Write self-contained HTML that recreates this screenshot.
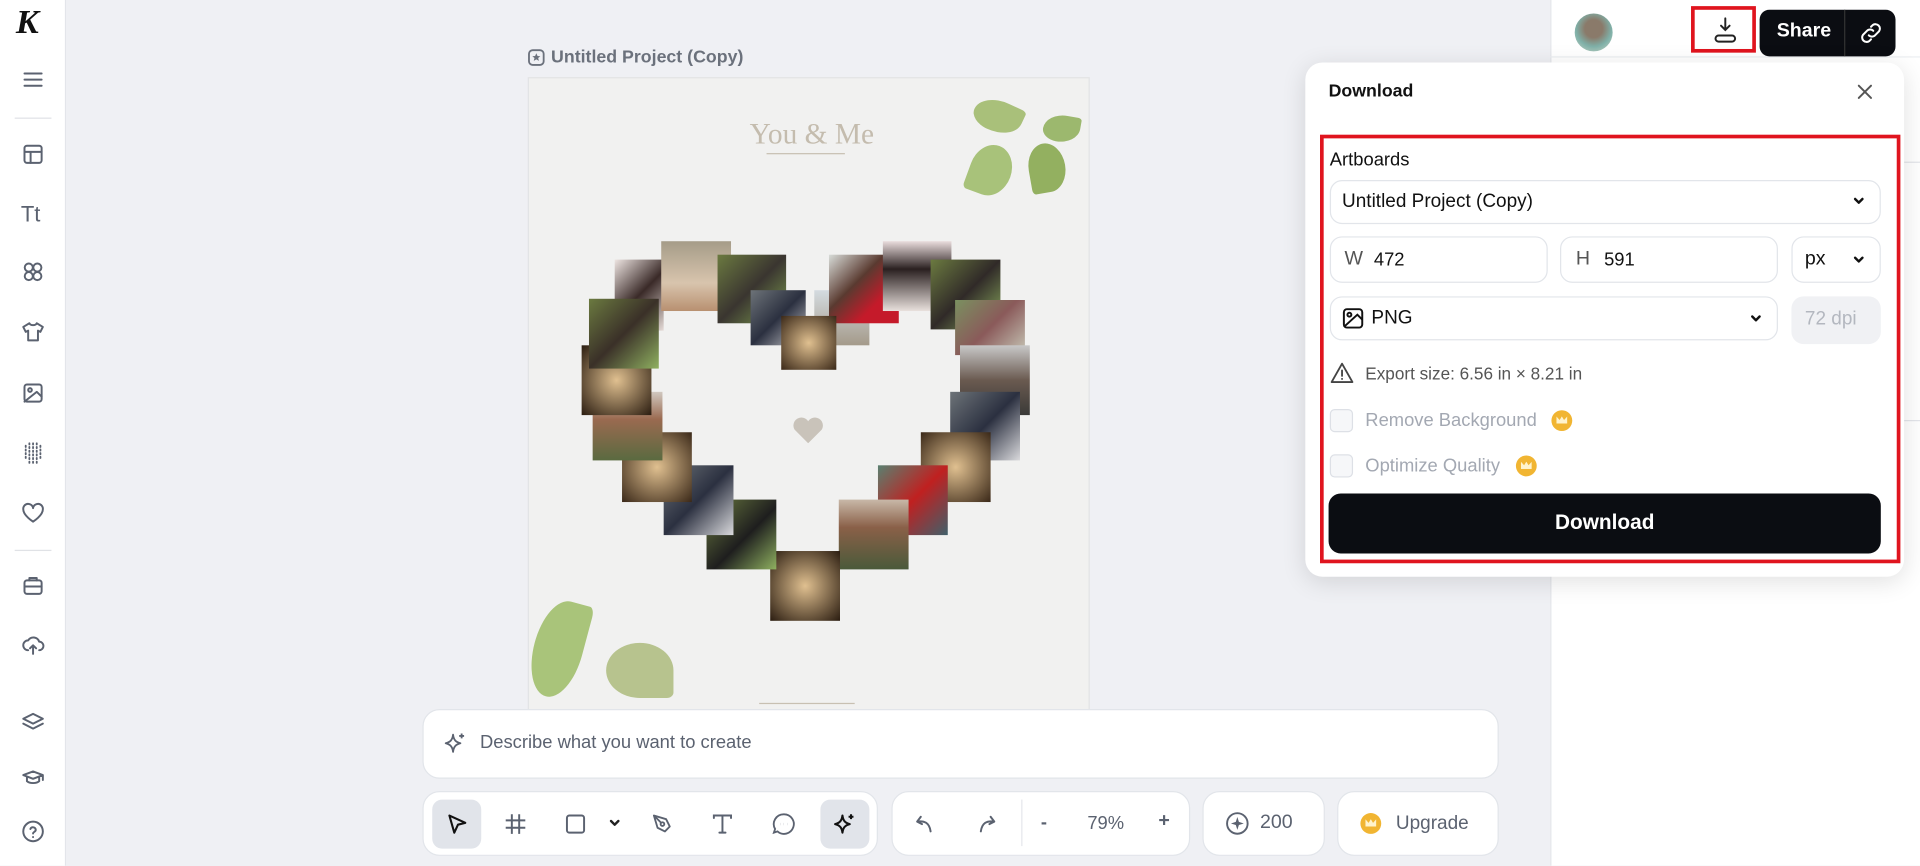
<!DOCTYPE html>
<html><head><meta charset="utf-8"><style>
*{box-sizing:border-box;margin:0;padding:0}
html,body{width:1920px;height:866px;overflow:hidden;background:#eff0f4}
#s{position:absolute;left:0;top:0;width:1568px;height:707px;transform:scale(1.22449);transform-origin:0 0;font-family:"Liberation Sans",sans-serif;background:#eff0f4}
.a{position:absolute}
.ic{position:absolute;left:17px;width:20px;height:20px;fill:none;stroke:#5b6270;stroke-width:1.6;stroke-linecap:round;stroke-linejoin:round}
.t{position:absolute}
.box{position:absolute;background:#fff;border:1px solid #e2e5ea;border-radius:10px}
.tb{position:absolute;background:#fff;border:1px solid #e2e5ea;border-radius:14px}
.chev{position:absolute;width:12px;height:12px;fill:none;stroke:#111;stroke-width:2;stroke-linecap:round;stroke-linejoin:round}
.crown{position:absolute;width:17px;height:17px;border-radius:50%;background:#f1b532}
.crown:after{content:"";position:absolute;left:4px;top:5px;width:9px;height:6px;background:#fff3cc;clip-path:polygon(0 100%,0 0,30% 50%,50% 0,70% 50%,100% 0,100% 100%)}
</style></head><body><div id="s">
<!-- left sidebar -->
<div class="a" style="left:0;top:0;width:54px;height:707px;background:#fff;border-right:1px solid #e3e5ea"></div>
<div class="a" style="left:13px;top:3px;font:italic 900 28px 'Liberation Serif',serif;color:#111">K</div>
<svg class="ic" style="top:55px" viewBox="0 0 20 20"><path d="M3 5h14M3 10h14M3 15h14"/></svg>
<div class="a" style="left:12px;top:96px;width:30px;height:1px;background:#e0e2e6"></div>
<svg class="ic" style="top:116px" viewBox="0 0 20 20"><rect x="3" y="3" width="14" height="14" rx="2"/><path d="M3 8h14M8 8v9"/></svg>
<div class="a" style="left:17px;top:165px;font:18px 'Liberation Sans';color:#5b6270">Tt</div>
<svg class="ic" style="top:212px" viewBox="0 0 20 20"><circle cx="6.5" cy="6.5" r="3.3"/><circle cx="13.5" cy="6.5" r="3.3"/><circle cx="6.5" cy="13.5" r="3.3"/><circle cx="13.5" cy="13.5" r="3.3"/></svg>
<svg class="ic" style="top:261px" viewBox="0 0 20 20"><path d="M7 3L2 6l2 4 2-1v8h8V9l2 1 2-4-5-3c-1 2-5 2-6 0z"/></svg>
<svg class="ic" style="top:311px" viewBox="0 0 20 20"><rect x="3" y="3" width="14" height="14" rx="2"/><circle cx="7.5" cy="7.5" r="1.5"/><path d="M17 13l-4-4-10 8"/></svg>
<svg class="ic" style="top:360px;stroke-width:1.5;stroke-dasharray:1 2" viewBox="0 0 20 20"><path d="M4 4v12M7 2v16M10 2v16M13 2v16M16 4v12"/></svg>
<svg class="ic" style="top:409px" viewBox="0 0 20 20"><path d="M10 17S2 12 2 7a4 4 0 018-1 4 4 0 018 1c0 5-8 10-8 10z"/></svg>
<div class="a" style="left:12px;top:449px;width:30px;height:1px;background:#e0e2e6"></div>
<svg class="ic" style="top:468px" viewBox="0 0 20 20"><rect x="3" y="6" width="14" height="11" rx="2"/><path d="M7 6V4h6v2M3 11h14"/></svg>
<svg class="ic" style="top:517px" viewBox="0 0 20 20"><path d="M6 14a4 4 0 010-8 5 5 0 019 1 3.5 3.5 0 010 7M10 10v7M7.5 12.5L10 10l2.5 2.5"/></svg>
<svg class="ic" style="top:580px" viewBox="0 0 20 20"><path d="M10 3l8 4-8 4-8-4zM2 11l8 4 8-4"/></svg>
<svg class="ic" style="top:625px" viewBox="0 0 20 20"><path d="M10 5l8 3-8 3-8-3zM5 9.5V13c2 2 8 2 10 0V9.5M18 8v4"/></svg>
<svg class="ic" style="top:669px" viewBox="0 0 20 20"><circle cx="10" cy="10" r="8"/><path d="M7.8 8a2.3 2.3 0 014.4.7c0 1.5-2.2 1.8-2.2 3M10 14.5v.2"/></svg>

<!-- right panel -->
<div class="a" style="left:1266px;top:0;width:302px;height:707px;background:#fff;border-left:1px solid #e3e5ea"></div>
<div class="a" style="left:1266px;top:46px;width:302px;height:1px;background:#eceef1"></div>
<div class="a" style="left:1555px;top:132px;width:13px;height:1px;background:#e3e5ea"></div>
<div class="a" style="left:1555px;top:343px;width:13px;height:1px;background:#e3e5ea"></div>
<div class="a" style="left:1286px;top:11px;width:31px;height:31px;border-radius:50%;background:radial-gradient(circle at 50% 40%,#8a7a6a 0 30%,#7fb0a8 60%,#cfd8c9)"></div>
<div class="a" style="left:1381px;top:5px;width:53px;height:38px;border:3px solid #e0141e"></div>
<svg class="a" style="left:1397px;top:12px;width:24px;height:26px;fill:none;stroke:#222;stroke-width:1.6;stroke-linecap:round" viewBox="0 0 24 26"><path d="M12 3v9M8.5 9l3.5 3.5L15.5 9"/><rect x="4" y="17" width="16" height="5" rx="2.5"/></svg>
<div class="a" style="left:1437px;top:8px;width:111px;height:38px;background:#0b0d12;border-radius:8px"></div>
<div class="a" style="left:1451px;top:17px;font:bold 16px 'Liberation Sans';color:#fff">Share</div>
<div class="a" style="left:1506px;top:8px;width:1px;height:38px;background:#333"></div>
<svg class="a" style="left:1517px;top:16px;width:22px;height:22px;fill:none;stroke:#fff;stroke-width:1.8;stroke-linecap:round" viewBox="0 0 24 24"><path d="M10 14a4 4 0 005.6 0l3.5-3.5a4 4 0 00-5.6-5.6L12 6.4M14 10a4 4 0 00-5.6 0L4.9 13.5a4 4 0 005.6 5.6l1.5-1.5"/></svg>

<!-- canvas -->
<svg class="a" style="left:431px;top:40px;width:14px;height:14px" viewBox="0 0 14 14"><rect x="1" y="1" width="12" height="12" rx="3" fill="none" stroke="#6b717c" stroke-width="1.5"/><path d="M7 3.5l1 2.2 2.3.2-1.8 1.5.6 2.3L7 8.5 4.9 9.7l.6-2.3L3.7 5.9 6 5.7z" fill="#6b717c"/></svg>
<div class="a" style="left:450px;top:39px;font:bold 14.5px 'Liberation Sans';color:#6b717c">Untitled Project (Copy)</div>
<div class="a" style="left:431px;top:63px;width:459px;height:572px;background:#f1f1f0;border:1px solid #e2e3e5"></div>
<div class="a" style="left:608px;top:97px;width:110px;text-align:center;font:24px 'Liberation Serif',serif;color:#c4bcae">You &amp; Me</div>
<div class="a" style="left:626px;top:125px;width:64px;height:1px;background:#c8c0b2"></div>
<!-- leaves -->
<div class="a" style="left:795px;top:82px;width:40px;height:26px;background:#a9c07a;border-radius:60% 10% 60% 40%;transform:rotate(25deg)"></div>
<div class="a" style="left:852px;top:94px;width:30px;height:22px;background:#9cb86e;border-radius:60% 10% 60% 40%;transform:rotate(10deg)"></div>
<div class="a" style="left:792px;top:118px;width:34px;height:42px;background:#a8c27a;border-radius:50% 50% 50% 10%;transform:rotate(20deg)"></div>
<div class="a" style="left:840px;top:117px;width:30px;height:40px;background:#93b060;border-radius:50% 50% 50% 10%;transform:rotate(-10deg)"></div>
<div class="a" style="left:436px;top:490px;width:40px;height:80px;background:#a9c47a;border-radius:50% 10% 50% 50%;transform:rotate(15deg)"></div>
<div class="a" style="left:495px;top:525px;width:55px;height:45px;background:#b7c38e;border-radius:50% 50% 10% 50%"></div>
<div class="a" style="left:620px;top:574px;width:78px;height:1px;background:#c8c0b2"></div>
<!-- heart tiles -->
<div class="a" style="left:647px;top:340px;width:26px;height:22px;background:#c9c3ba;clip-path:path('M13 22L2 11A6 6 0 0113 4a6 6 0 0111 7z')"></div>
<div class="a" style="left:502px;top:212px;width:40px;height:58px;background:linear-gradient(135deg,#eee5e2,#3a2a28 50%,#e6dcd8)"></div>
<div class="a" style="left:540px;top:197px;width:57px;height:57px;background:linear-gradient(#a59c88,#d8c4ad 60%,#b89070)"></div>
<div class="a" style="left:586px;top:208px;width:56px;height:56px;background:linear-gradient(135deg,#6b7a40,#3a3530 50%,#7fa050)"></div>
<div class="a" style="left:613px;top:237px;width:45px;height:45px;background:linear-gradient(135deg,#6d7378,#2b3040 50%,#c9c9cc)"></div>
<div class="a" style="left:665px;top:237px;width:45px;height:45px;background:linear-gradient(#d4dbe0,#a49a8a)"></div>
<div class="a" style="left:677px;top:208px;width:57px;height:56px;background:linear-gradient(135deg,#d8dcd8,#5a3a30 40%,#c51a2a 70%)"></div>
<div class="a" style="left:721px;top:197px;width:56px;height:57px;background:linear-gradient(#e9dcdc,#2a2020 40%,#e8e0dc)"></div>
<div class="a" style="left:638px;top:258px;width:45px;height:44px;background:radial-gradient(#e0c090,#3a2818)"></div>
<div class="a" style="left:760px;top:212px;width:57px;height:57px;background:linear-gradient(135deg,#6b7a40,#302a28 50%,#8fb060)"></div>
<div class="a" style="left:780px;top:245px;width:57px;height:45px;background:linear-gradient(135deg,#7a9060,#8a5a5a 50%,#c8c8b8)"></div>
<div class="a" style="left:784px;top:282px;width:57px;height:57px;background:linear-gradient(#c8c8c8,#6a5a50 50%,#3a3a38)"></div>
<div class="a" style="left:776px;top:320px;width:57px;height:56px;background:linear-gradient(135deg,#6d7378,#2b3040 50%,#d9d9dc)"></div>
<div class="a" style="left:752px;top:353px;width:57px;height:57px;background:radial-gradient(#e0c090,#3a2818)"></div>
<div class="a" style="left:717px;top:380px;width:57px;height:57px;background:linear-gradient(135deg,#5a8070,#c02020 50%,#40606a)"></div>
<div class="a" style="left:685px;top:408px;width:57px;height:57px;background:linear-gradient(#c8b8a8,#8a6048 40%,#4a5a3a)"></div>
<div class="a" style="left:629px;top:450px;width:57px;height:57px;background:radial-gradient(#e0c090,#2a1c10)"></div>
<div class="a" style="left:577px;top:408px;width:57px;height:57px;background:linear-gradient(135deg,#6b7a40,#1e1e1e 55%,#8fb060)"></div>
<div class="a" style="left:542px;top:380px;width:57px;height:57px;background:linear-gradient(135deg,#6d7378,#2b3040 50%,#d9d9dc)"></div>
<div class="a" style="left:508px;top:353px;width:57px;height:57px;background:radial-gradient(#e0c090,#3a2818)"></div>
<div class="a" style="left:484px;top:320px;width:57px;height:56px;background:linear-gradient(#d0c8c0,#9a6a50 40%,#5a6a40)"></div>
<div class="a" style="left:475px;top:282px;width:57px;height:57px;background:radial-gradient(#e0c090,#2a1c10)"></div>
<div class="a" style="left:481px;top:244px;width:57px;height:57px;background:linear-gradient(135deg,#6b7a40,#3a3028 50%,#8fb060)"></div>

<!-- prompt -->
<div class="tb" style="left:345px;top:579px;width:879px;height:57px"></div>
<svg class="a" style="left:362px;top:597px;width:20px;height:20px;fill:none;stroke:#5b6270;stroke-width:1.5;stroke-linejoin:round" viewBox="0 0 20 20"><path d="M8 3c.5 4 2 6 6 7-4 1-5.5 3-6 7-.5-4-2-6-6-7 4-1 5.5-3 6-7zM15 2v4M13 4h4"/></svg>
<div class="a" style="left:392px;top:598px;font:15px 'Liberation Sans';color:#5b6270">Describe what you want to create</div>

<!-- toolbar -->
<div class="tb" style="left:345px;top:646px;width:372px;height:53px"></div>
<div class="a" style="left:353px;top:653px;width:40px;height:40px;background:#e1e4ea;border-radius:8px"></div>
<div class="a" style="left:670px;top:653px;width:40px;height:40px;background:#e1e4ea;border-radius:8px"></div>
<svg class="a" style="left:363px;top:663px;width:20px;height:20px;fill:none;stroke:#111;stroke-width:1.7;stroke-linejoin:round" viewBox="0 0 20 20"><path d="M4 3l13 6-6 1.5L8 17z"/></svg>
<svg class="a" style="left:411px;top:663px;width:20px;height:20px;fill:none;stroke:#5b6270;stroke-width:1.6" viewBox="0 0 20 20"><path d="M7 2v16M13 2v16M2 7h16M2 13h16"/></svg>
<svg class="a" style="left:460px;top:663px;width:20px;height:20px;fill:none;stroke:#5b6270;stroke-width:1.6" viewBox="0 0 20 20"><rect x="3" y="3" width="14" height="14" rx="2"/></svg>
<svg class="chev" style="left:496px;top:666px;stroke:#222" viewBox="0 0 12 12"><path d="M3 4.5L6 7.5 9 4.5"/></svg>
<svg class="a" style="left:531px;top:663px;width:20px;height:20px;fill:none;stroke:#5b6270;stroke-width:1.5;stroke-linejoin:round" viewBox="0 0 20 20"><path d="M3 3l10 3 3 6-4 4-6-3zM3 3l6 6"/><circle cx="10" cy="10" r="1.5"/></svg>
<svg class="a" style="left:580px;top:663px;width:20px;height:20px;fill:none;stroke:#5b6270;stroke-width:1.6;stroke-linecap:round" viewBox="0 0 20 20"><path d="M3 5V3h14v2M10 3v14M7.5 17h5"/></svg>
<svg class="a" style="left:630px;top:663px;width:20px;height:20px;fill:none;stroke:#5b6270;stroke-width:1.5" viewBox="0 0 20 20"><path d="M10 2a8 8 0 11-5 14l-3 1 1-3A8 8 0 0110 2z"/><path d="M7 10h.1M10 10h.1M13 10h.1" stroke-width="2"/></svg>
<svg class="a" style="left:680px;top:663px;width:20px;height:20px;fill:none;stroke:#111;stroke-width:1.7;stroke-linejoin:round" viewBox="0 0 20 20"><path d="M8 3c.5 4 2 6 6 7-4 1-5.5 3-6 7-.5-4-2-6-6-7 4-1 5.5-3 6-7zM15 2v4M13 4h4"/></svg>

<div class="tb" style="left:728px;top:646px;width:244px;height:53px"></div>
<svg class="a" style="left:746px;top:663px;width:20px;height:20px;fill:none;stroke:#5b6270;stroke-width:1.6;stroke-linecap:round;stroke-linejoin:round" viewBox="0 0 20 20"><path d="M6 4L3 8l4 2M3 8c6-1 10 1 11 8"/></svg>
<svg class="a" style="left:795px;top:663px;width:20px;height:20px;fill:none;stroke:#5b6270;stroke-width:1.6;stroke-linecap:round;stroke-linejoin:round" viewBox="0 0 20 20"><path d="M14 4l3 4-4 2M17 8c-6-1-10 1-11 8"/></svg>
<div class="a" style="left:834px;top:653px;width:1px;height:38px;background:#e5e7eb"></div>
<div class="a" style="left:850px;top:663px;font:bold 15px 'Liberation Sans';color:#5b6270">-</div>
<div class="a" style="left:888px;top:664px;font:15px 'Liberation Sans';color:#5b6270">79%</div>
<div class="a" style="left:946px;top:662px;font:bold 16px 'Liberation Sans';color:#5b6270">+</div>

<div class="tb" style="left:982px;top:646px;width:100px;height:53px"></div>
<svg class="a" style="left:1000px;top:662px;width:21px;height:21px;fill:none;stroke:#5b6270;stroke-width:1.5" viewBox="0 0 20 20"><circle cx="10" cy="10" r="8"/><path d="M10 5l1.2 3.8L15 10l-3.8 1.2L10 15l-1.2-3.8L5 10l3.8-1.2z" fill="#5b6270" stroke="none"/></svg>
<div class="a" style="left:1029px;top:663px;font:16px 'Liberation Sans';color:#5b6270">200</div>

<div class="tb" style="left:1092px;top:646px;width:132px;height:53px"></div>
<div class="crown" style="left:1111px;top:664px"></div>
<div class="a" style="left:1140px;top:664px;font:15.5px 'Liberation Sans';color:#5b6270">Upgrade</div>

<!-- popup -->
<div class="a" style="left:1066px;top:51px;width:489px;height:420px;background:#fff;border-radius:14px;box-shadow:0 4px 20px rgba(0,0,0,.12)"></div>
<div class="a" style="left:1085px;top:67px;font:bold 14.5px 'Liberation Sans';color:#111">Download</div>
<svg class="a" style="left:1516px;top:68px;width:14px;height:14px;stroke:#555;stroke-width:1.6;stroke-linecap:round" viewBox="0 0 14 14"><path d="M2 2l10 10M12 2L2 12"/></svg>
<div class="a" style="left:1078px;top:110px;width:474px;height:350px;border:3px solid #e0141e"></div>
<div class="a" style="left:1086px;top:122px;font:15px 'Liberation Sans';color:#111">Artboards</div>
<div class="box" style="left:1086px;top:147px;width:450px;height:36px"></div>
<div class="a" style="left:1096px;top:156px;font:15.5px 'Liberation Sans';color:#111">Untitled Project (Copy)</div>
<svg class="chev" style="left:1512px;top:158px" viewBox="0 0 12 12"><path d="M3 4.5L6 7.5 9 4.5"/></svg>
<div class="box" style="left:1086px;top:193px;width:178px;height:38px"></div>
<div class="a" style="left:1098px;top:203px;font:16px 'Liberation Sans';color:#555">W</div>
<div class="a" style="left:1122px;top:204px;font:15px 'Liberation Sans';color:#111">472</div>
<div class="box" style="left:1274px;top:193px;width:178px;height:38px"></div>
<div class="a" style="left:1287px;top:203px;font:16px 'Liberation Sans';color:#555">H</div>
<div class="a" style="left:1310px;top:204px;font:15px 'Liberation Sans';color:#111">591</div>
<div class="box" style="left:1463px;top:193px;width:73px;height:38px"></div>
<div class="a" style="left:1474px;top:203px;font:16px 'Liberation Sans';color:#111">px</div>
<svg class="chev" style="left:1512px;top:206px" viewBox="0 0 12 12"><path d="M3 4.5L6 7.5 9 4.5"/></svg>
<div class="box" style="left:1086px;top:242px;width:366px;height:36px"></div>
<svg class="a" style="left:1096px;top:251px;width:18px;height:18px;fill:none;stroke:#111;stroke-width:1.6" viewBox="0 0 18 18"><rect x="1.5" y="1.5" width="15" height="15" rx="2.5"/><circle cx="6" cy="6" r="1.6"/><path d="M16.5 10l-4-4L1.5 16"/></svg>
<div class="a" style="left:1120px;top:251px;font:15.5px 'Liberation Sans';color:#111">PNG</div>
<svg class="chev" style="left:1428px;top:254px" viewBox="0 0 12 12"><path d="M3 4.5L6 7.5 9 4.5"/></svg>
<div class="a" style="left:1463px;top:242px;width:73px;height:39px;background:#f0f1f4;border-radius:10px"></div>
<div class="a" style="left:1474px;top:252px;font:15.5px 'Liberation Sans';color:#b3b7bf">72 dpi</div>
<svg class="a" style="left:1086px;top:295px;width:20px;height:19px;fill:none;stroke:#444;stroke-width:1.5;stroke-linejoin:round" viewBox="0 0 20 19"><path d="M10 2L1.5 17h17z"/><path d="M10 7.5v4.5M10 14.3v.2" stroke-linecap="round"/></svg>
<div class="a" style="left:1115px;top:297px;font:14px 'Liberation Sans';color:#555">Export size: 6.56 in × 8.21 in</div>
<div class="a" style="left:1086px;top:334px;width:19px;height:19px;border:1.5px solid #dde0e6;border-radius:4px;background:#f6f7f9"></div>
<div class="a" style="left:1115px;top:335px;font:15px 'Liberation Sans';color:#a3a8b2">Remove Background</div>
<div class="crown" style="left:1267px;top:335px"></div>
<div class="a" style="left:1086px;top:371px;width:19px;height:19px;border:1.5px solid #dde0e6;border-radius:4px;background:#f6f7f9"></div>
<div class="a" style="left:1115px;top:372px;font:15px 'Liberation Sans';color:#a3a8b2">Optimize Quality</div>
<div class="crown" style="left:1238px;top:372px"></div>
<div class="a" style="left:1085px;top:403px;width:451px;height:49px;background:#0b0d12;border-radius:10px"></div>
<div class="a" style="left:1085px;top:417px;width:451px;text-align:center;font:bold 17px 'Liberation Sans';color:#fff">Download</div>
</div></body></html>
